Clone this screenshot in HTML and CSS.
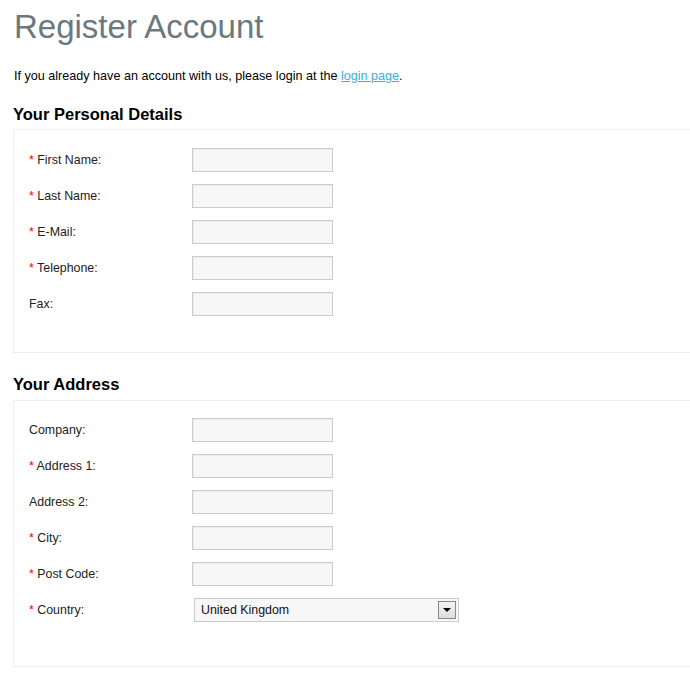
FILE: index.html
```html
<!DOCTYPE html>
<html lang="en">
<head>
  <meta charset="UTF-8">
  <title>Register Account</title>
  <link rel="stylesheet" href="styles.css">
</head>
<body>
  <div class="page">
    <h1>Register Account</h1>
    <p class="intro">If you already have an account with us, please login at the <a href="#">login page</a>.</p>

    <h2>Your Personal Details</h2>
    <div class="content">
      <div class="form">
        <label><span class="required">*</span> First Name:</label>
        <input type="text">
        <label><span class="required">*</span> Last Name:</label>
        <input type="text">
        <label><span class="required">*</span> E-Mail:</label>
        <input type="text">
        <label><span class="required">*</span> Telephone:</label>
        <input type="text">
        <label>Fax:</label>
        <input type="text">
      </div>
    </div>

    <h2>Your Address</h2>
    <div class="content content-last">
      <div class="form">
        <label>Company:</label>
        <input type="text">
        <label><span class="required">*</span> Address 1:</label>
        <input type="text">
        <label>Address 2:</label>
        <input type="text">
        <label><span class="required">*</span> City:</label>
        <input type="text">
        <label><span class="required">*</span> Post Code:</label>
        <input type="text">
        <label><span class="required">*</span> Country:</label>
        <div class="select">
          <span class="select-value">United Kingdom</span>
          <span class="select-arrow">
            <svg width="8" height="4" viewBox="0 0 8 4"><path d="M0 0H8L4 4Z" fill="#000"/></svg>
          </span>
        </div>
      </div>
    </div>
  </div>
</body>
</html>
```

FILE: styles.css
```css
body {
  margin: 0;
  font-family: 'Liberation Sans', Arial, sans-serif;
  font-size: 12px;
  color: #000;
  background: #fff;
}

.page {
  padding: 6px 0 0 13px;
  width: 720px;
}

h1 {
  margin: 0 0 0 1px;
  font-size: 33px;
  font-weight: normal;
  line-height: 42px;
  color: #6b7880;
}

.intro {
  margin: 21px 0 0 1px;
  line-height: 14px;
  font-size: 12.6px;
}

.intro a {
  color: #38b0e3;
}

h2 {
  margin: 21px 0 0 0;
  font-size: 16.5px;
  line-height: 20px;
  color: #000;
}

.content {
  margin-top: 5px;
  border: 1px solid #eee;
  padding: 12px 10px 30px 10px;
  margin-bottom: 21px;
}

.content-last {
  margin-top: 6px;
  padding-top: 11px;
  padding-bottom: 38px;
}

.form {
  display: grid;
  grid-template-columns: 168px auto;
  grid-auto-rows: 36px;
  align-items: center;
  justify-items: start;
}

.form label {
  padding-left: 5px;
  color: #222;
  font-size: 12.4px;
}

.required {
  color: #f00;
}

.form input {
  box-sizing: border-box;
  width: 141px;
  height: 24px;
  margin: 0;
  border: 1px solid #ccc;
  background: #f7f7f7;
  box-shadow: inset 1px 1px 0 #ececec;
}

.select {
  box-sizing: border-box;
  margin-left: 2px;
  width: 265px;
  height: 24px;
  border: 1px solid #ccc;
  background: #f7f7f7;
  display: flex;
  align-items: center;
  justify-content: space-between;
  padding: 0 2px 0 6px;
  color: #111;
  font-size: 12.4px;
}

.select-arrow {
  box-sizing: border-box;
  width: 18px;
  height: 18px;
  border: 1px solid #888;
  background: linear-gradient(#f4f4f4, #dcdcdc);
  display: flex;
  align-items: center;
  justify-content: center;
}
```
